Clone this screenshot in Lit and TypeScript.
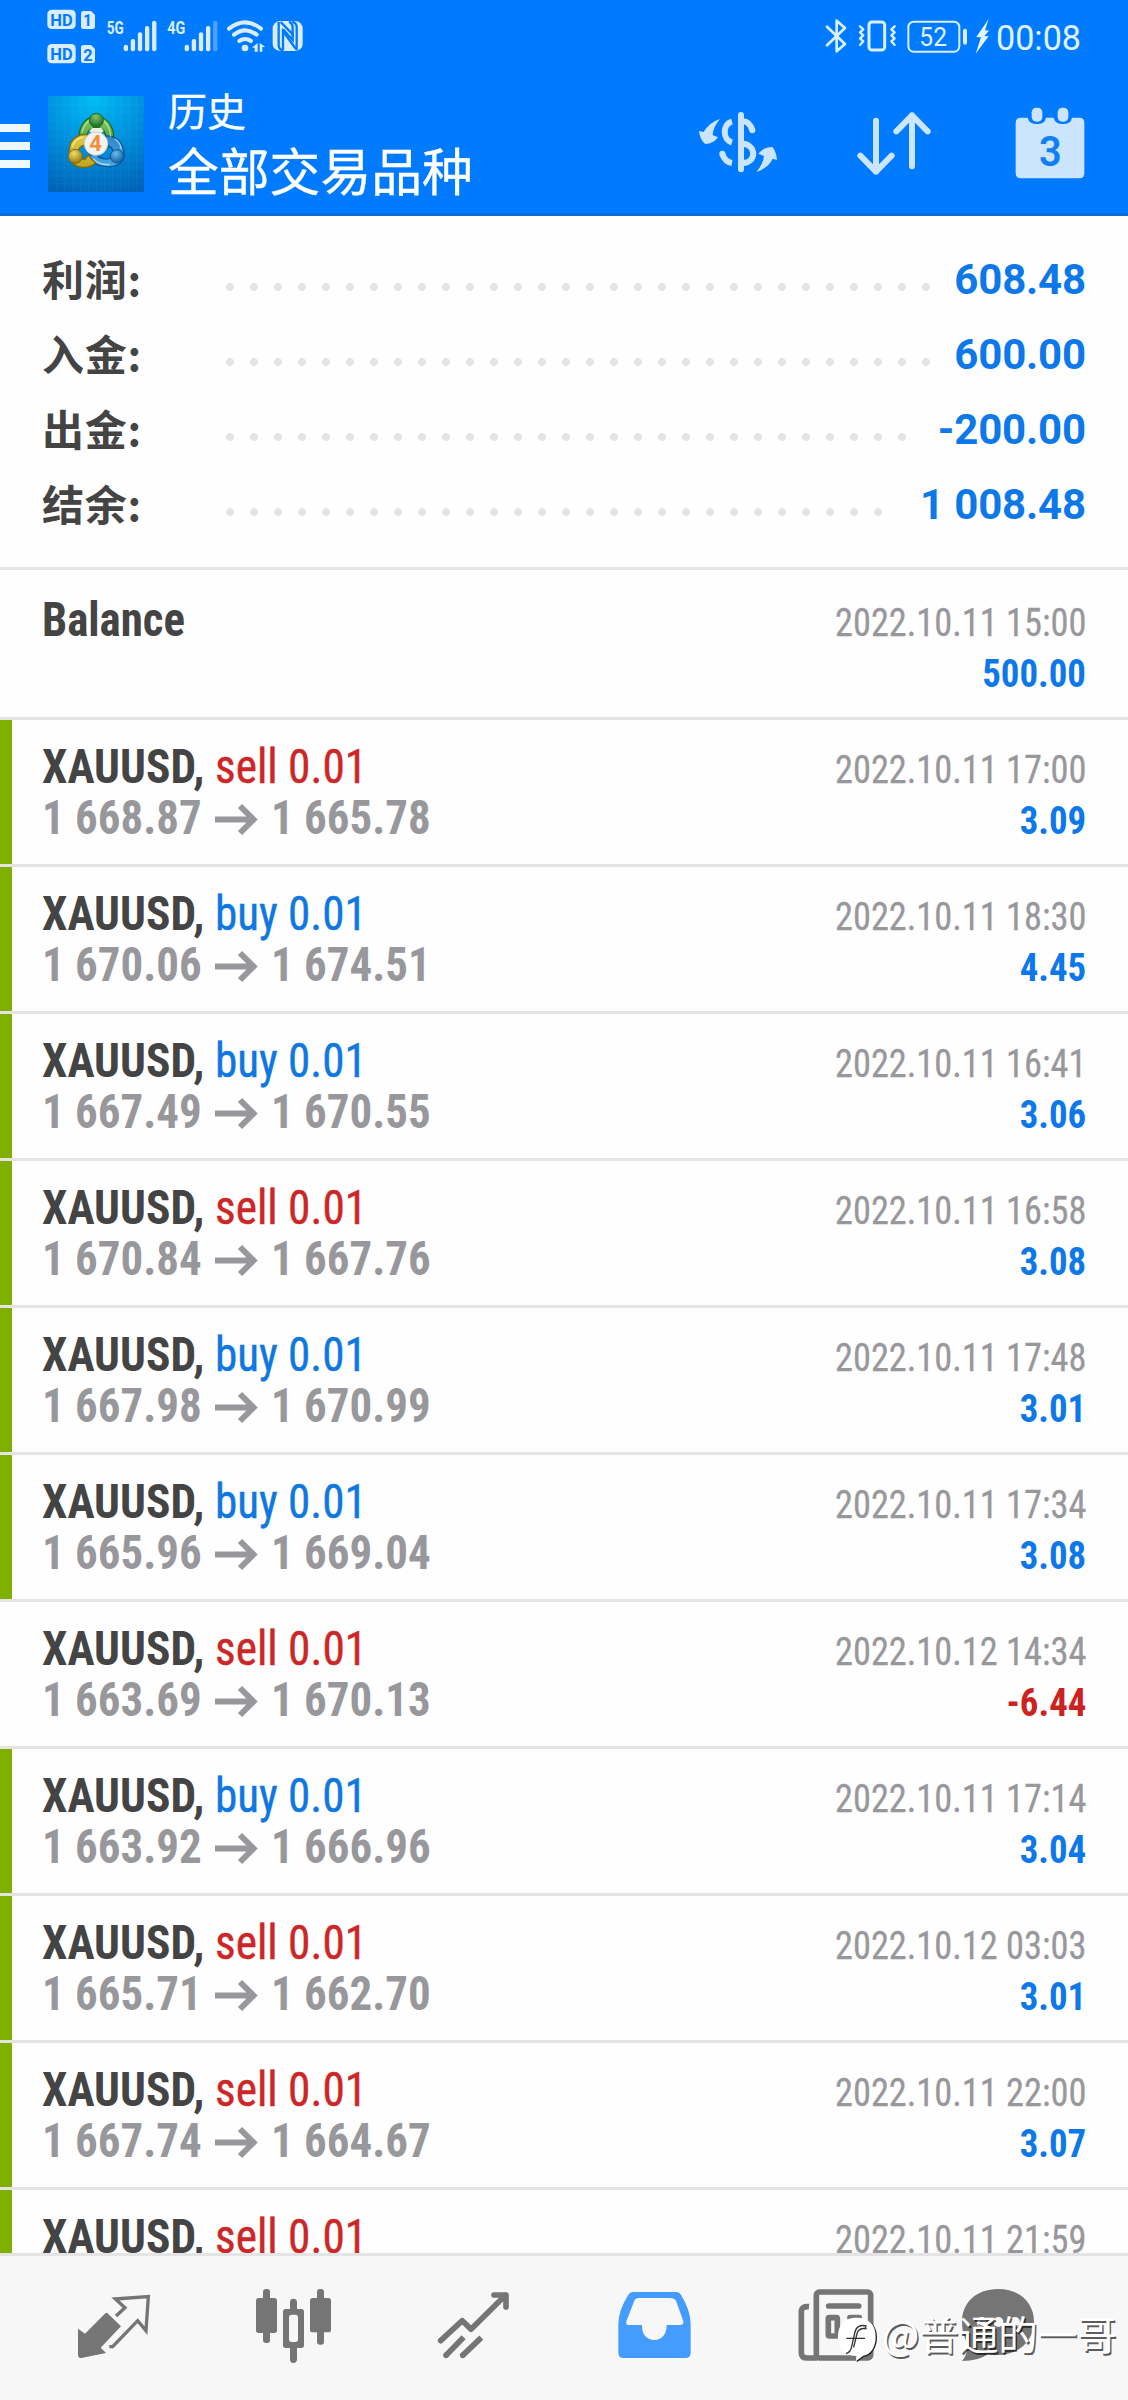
import { LitElement, html, css, svg, nothing } from "lit";
import { customElement, property } from "lit/decorators.js";
import { classMap } from "lit/directives/class-map.js";

interface Deal {
  side: "buy" | "sell";
  open: string;
  close: string;
  time: string;
  profit: string;
}

const DEALS: Deal[] = [
  { side: "sell", open: "1 668.87", close: "1 665.78", time: "2022.10.11 17:00", profit: "3.09" },
  { side: "buy", open: "1 670.06", close: "1 674.51", time: "2022.10.11 18:30", profit: "4.45" },
  { side: "buy", open: "1 667.49", close: "1 670.55", time: "2022.10.11 16:41", profit: "3.06" },
  { side: "sell", open: "1 670.84", close: "1 667.76", time: "2022.10.11 16:58", profit: "3.08" },
  { side: "buy", open: "1 667.98", close: "1 670.99", time: "2022.10.11 17:48", profit: "3.01" },
  { side: "buy", open: "1 665.96", close: "1 669.04", time: "2022.10.11 17:34", profit: "3.08" },
  { side: "sell", open: "1 663.69", close: "1 670.13", time: "2022.10.12 14:34", profit: "-6.44" },
  { side: "buy", open: "1 663.92", close: "1 666.96", time: "2022.10.11 17:14", profit: "3.04" },
  { side: "sell", open: "1 665.71", close: "1 662.70", time: "2022.10.12 03:03", profit: "3.01" },
  { side: "sell", open: "1 667.74", close: "1 664.67", time: "2022.10.11 22:00", profit: "3.07" },
  { side: "sell", open: "", close: "", time: "2022.10.11 21:59", profit: "" },
];

const SUMMARY = [
  { label: "利润:", value: "608.48", dots: 30 },
  { label: "入金:", value: "600.00", dots: 30 },
  { label: "出金:", value: "-200.00", dots: 29 },
  { label: "结余:", value: "1 008.48", dots: 28 },
];

/** Condenses its text horizontally so that it takes exactly `w` pixels. */
@customElement("fit-text")
class FitText extends LitElement {
  @property({ type: Number }) w = 0;
  @property() text = "";

  static styles = css`
    :host { display: inline-block; white-space: pre; vertical-align: top; }
    .inner { display: inline-block; transform-origin: 0 50%; white-space: pre; }
  `;

  updated() {
    const inner = this.renderRoot.querySelector(".inner") as HTMLElement;
    const natural = inner.offsetWidth;
    this.style.width = this.w + "px";
    if (natural) inner.style.transform = `scaleX(${this.w / natural})`;
  }

  render() {
    return html`<span class="inner">${this.text}</span>`;
  }
}

@customElement("status-bar")
class StatusBar extends LitElement {
  static styles = css`
    :host { display: flex; justify-content: space-between; height: 72px; }
    svg { display: block; }
    text { font-family: Roboto, "Noto Sans", sans-serif; }
  `;

  render() {
    return html`
      <svg width="340" height="72" viewBox="0 0 1020 216" fill="#d9edff">
        <rect x="142" y="29" width="85" height="58" rx="13" />
        <rect x="142" y="132" width="85" height="58" rx="13" />
        <path d="M250 33H273L285 45V80Q285 87 278 87H250Q243 87 243 80V40Q243 33 250 33Z" />
        <path d="M250 135H273L285 147V182Q285 189 278 189H250Q243 189 243 182V142Q243 135 250 135Z" />
        <g fill="#007aff" font-weight="700">
          <text x="151" y="77" font-size="51" textLength="67" lengthAdjust="spacingAndGlyphs">HD</text>
          <text x="151" y="180" font-size="51" textLength="67" lengthAdjust="spacingAndGlyphs">HD</text>
          <text x="250" y="79" font-size="48" textLength="26" lengthAdjust="spacingAndGlyphs">1</text>
          <text x="250" y="182" font-size="48" textLength="28" lengthAdjust="spacingAndGlyphs">2</text>
        </g>
        <g font-weight="700">
          <text x="320" y="103" font-size="54" textLength="51" lengthAdjust="spacingAndGlyphs">5G</text>
          <text x="502" y="103" font-size="54" textLength="54" lengthAdjust="spacingAndGlyphs">4G</text>
        </g>
        ${[371, 554].map((x, s) =>
          [0, 1, 2, 3, 4].map((i) => {
            const h = [20, 37, 57, 76, 92][i];
            return svg`<rect x=${x + i * 21.3} y=${154 - h} width="13" height=${h} rx="6"
              opacity=${s === 1 && i === 4 ? 0.35 : 1} />`;
          })
        )}
        <g fill="none" stroke="#d9edff" stroke-width="12" stroke-linecap="round">
          <path d="M687 86Q735 48 783 86" />
          <path d="M702 104Q735 78 770 104" />
          <path d="M718 123Q735 111 753 123" />
        </g>
        <circle cx="735" cy="144" r="10" />
        <path d="M756 143L773 129V155H764V143ZM779 129L796 141H787V155H779Z" />
        <rect x="818" y="63" width="90" height="90" rx="22" />
        <g fill="none" stroke="#007aff" stroke-width="7">
          <path d="M836 66V136Q837 149 850 151" />
          <path d="M842 66L878 103V80Q876 69 867 65" />
          <path d="M890 151V80Q889 69 877 65" />
          <path d="M849 151V94L888 147" />
          <path d="M849 88L878 120V98" />
        </g>
      </svg>
      <svg width="468" height="72" viewBox="0 0 1404 216" fill="none" stroke="#d9f1ff" stroke-linecap="round" stroke-linejoin="round">
        <path stroke-width="8" d="M501 80L555 132L530 154V62L555 84L501 136" />
        <rect x="627" y="66" width="47" height="84" rx="9" stroke-width="9" />
        <path stroke-width="7" d="M600 79L610 88L600 97L610 106L600 115L610 124L600 135M704 79L694 88L704 97L694 106L704 115L694 124L704 135" />
        <rect x="745" y="65" width="153" height="90" rx="16" stroke-width="6" />
        <path stroke-width="12" d="M915 92V128" />
        <path fill="#e6f6ff" stroke="none" d="M986 57L949 111L963 112L947 161L986 109L973 108L987 92L975 91Z" />
        <g fill="#e0f4ff" stroke="none">
          <text x="778" y="137" font-size="78" textLength="83" lengthAdjust="spacingAndGlyphs">52</text>
          <text x="1008" y="151" font-size="107" textLength="255" lengthAdjust="spacingAndGlyphs">00:08</text>
        </g>
      </svg>
    `;
  }
}

@customElement("app-bar")
class AppBar extends LitElement {
  static styles = css`
    :host { display: flex; height: 141px; border-bottom: 3px solid #0a6cdb; }
    svg { display: block; flex: none; }
    .menu { display: flex; flex-direction: column; gap: 10px; width: 30px; padding-top: 52px; }
    .menu i { height: 8px; background: #eef8ff; }
    .logo { margin: 24px 0 0 18px; }
    .titles {
      display: flex; flex-direction: column; margin: 7px auto 0 24px; color: #fff;
      font-family: "Noto Sans CJK SC", sans-serif; line-height: 60px; white-space: nowrap;
      -webkit-text-stroke: 0.35px #fff;
    }
    .screen { font-size: 39px; }
    .filter { font-size: 50.8px; }
    text { font-family: Roboto, sans-serif; }
  `;

  private logo() {
    const lines = [170, 193, 217, 241, 265, 289, 313, 337, 361, 385, 409];
    return html`<svg class="logo" width="96" height="96" viewBox="144 288 288 288">
      <defs>
        <radialGradient id="bg" cx="48%" cy="2%" r="105%">
          <stop offset="0" stop-color="#00bdf6" /><stop offset=".5" stop-color="#008fdc" /><stop offset="1" stop-color="#0062b5" />
        </radialGradient>
        <linearGradient id="gr" x1="0" y1="0" x2="0" y2="1"><stop offset="0" stop-color="#8bcf62" /><stop offset="1" stop-color="#2e8a2f" /></linearGradient>
        <linearGradient id="ye" x1="0" y1="0" x2="0" y2="1"><stop offset="0" stop-color="#e2cf48" /><stop offset="1" stop-color="#c0a41c" /></linearGradient>
        <linearGradient id="bl" x1="0" y1="0" x2="0" y2="1"><stop offset="0" stop-color="#2f86cc" /><stop offset="1" stop-color="#4ba6e2" /></linearGradient>
        <radialGradient id="gh" cx="45%" cy="25%" r="65%"><stop offset="0" stop-color="#84c46c" /><stop offset="1" stop-color="#23742a" /></radialGradient>
        <radialGradient id="yh" cx="40%" cy="30%" r="65%"><stop offset="0" stop-color="#eddc6a" /><stop offset="1" stop-color="#9c8215" /></radialGradient>
        <radialGradient id="bh" cx="40%" cy="30%" r="65%"><stop offset="0" stop-color="#6fbcec" /><stop offset="1" stop-color="#1467a8" /></radialGradient>
      </defs>
      <rect x="144" y="288" width="288" height="288" fill="url(#bg)" />
      <g stroke="#7fd3ff" stroke-opacity=".11" stroke-width="2">
        ${lines.map((v) => svg`<path d="M${v} 288V576M144 ${v + 143}H432" />`)}
      </g>
      <g stroke-linejoin="round">
        <path fill="url(#gr)" stroke="#1d6b25" stroke-width="4" d="M237 408C238 380 254 358 275 351H304C328 361 342 387 341 414C338 432 325 446 309 449L300 431L318 412C316 393 304 383 290 382C273 383 262 394 260 408Z" />
        <path fill="url(#bl)" stroke="#0d5799" stroke-width="4" d="M318 408C347 407 366 425 371 452L372 473C364 494 342 503 318 500C294 499 274 487 266 466L287 462C298 476 318 481 334 474L339 451C334 440 325 434 309 435Z" />
        <path fill="url(#ye)" stroke="#7d6b10" stroke-width="4" d="M262 404C237 401 215 415 209 439L206 468C212 492 231 504 254 502C270 501 282 494 287 487C276 481 270 474 265 465L254 479L238 473C230 459 234 442 250 436L263 440Z" />
        <path fill="none" stroke="#d8f0b8" stroke-opacity=".65" stroke-width="4" d="M246 398Q252 374 268 361M312 364Q331 382 332 410" />
        <path fill="none" stroke="#fff4a8" stroke-opacity=".75" stroke-width="4" d="M216 442Q224 416 250 411" />
        <path fill="none" stroke="#c6ecff" stroke-opacity=".75" stroke-width="4" d="M345 417Q361 427 364 448M280 476Q299 496 329 493" />
      </g>
      <path fill="#e9f3dc" d="M268 393L276 384H304L311 393L302 400H275Z" />
      <circle cx="289" cy="361" r="21" fill="url(#gh)" stroke="#1d6b25" stroke-width="3" />
      <circle cx="226" cy="469" r="21" fill="url(#yh)" stroke="#7d6b10" stroke-width="3" />
      <circle cx="351" cy="469" r="20" fill="url(#bh)" stroke="#0d5799" stroke-width="3" />
      <circle cx="288" cy="431" r="35" fill="#f4f3f2" stroke="#c9cfd3" stroke-width="3" />
      <text x="287" y="454" text-anchor="middle" font-size="66" font-weight="700" fill="#f0913a">4</text>
    </svg>`;
  }

  render() {
    return html`
      <div class="menu"><i></i><i></i><i></i></div>
      ${this.logo()}
      <div class="titles"><span class="screen">历史</span><span class="filter">全部交易品种</span></div>
      <svg width="156" height="141" viewBox="0 216 468 423" fill="#cce5ff">
        <path d="M117 393L131 396Q148 367 180 357Q160 380 158 405L174 412Q160 432 136 432Q120 420 117 393Z" />
        <path d="M351 480L338 476Q325 504 289 516Q309 493 312 468L295 461Q312 441 337 441Q348 452 351 480Z" />
        <g fill="none" stroke="#cce5ff" stroke-width="18">
          <path d="M216 365C187 372 187 419 216 427" />
          <path d="M187 462Q195 486 216 489" stroke-linecap="butt" />
          <path d="M243 345V508" stroke-linecap="round" />
          <path d="M250 364Q270 366 277 391" />
          <path d="M250 431C290 437 289 486 250 489" />
        </g>
        <circle cx="187" cy="461" r="9" /><circle cx="277" cy="391" r="9" />
      </svg>
      <svg width="156" height="141" viewBox="468 216 468 423" fill="none" stroke="#cce5ff" stroke-width="18" stroke-linecap="round" stroke-linejoin="round">
        <path d="M648 362V515M601 467L648 515L695 467" />
        <path d="M756 499V346M709 394L756 346L803 394" />
      </svg>
      <svg width="156" height="141" viewBox="936 216 468 423" fill="#cce5ff">
        <path d="M1082 353H1103Q1107 372 1131 372Q1155 372 1158 353H1181Q1185 372 1209 372Q1233 372 1236 353H1258Q1273 353 1273 368V520Q1273 535 1258 535H1082Q1067 535 1067 520V368Q1067 353 1082 353Z" />
        <rect x="1115" y="323" width="32" height="42" rx="14" />
        <rect x="1193" y="323" width="32" height="42" rx="14" />
        <text x="1171" y="497" text-anchor="middle" font-size="130" font-weight="600" fill="#0f7ff5" textLength="68" lengthAdjust="spacingAndGlyphs">3</text>
      </svg>
    `;
  }
}

@customElement("account-summary")
class AccountSummary extends LitElement {
  static styles = css`
    :host { display: block; padding: 26px 42px 25px 42px; border-bottom: 3px solid #e4e4e4; }
    .row { display: flex; height: 75px; align-items: flex-start; }
    .label { width: 176px; color: #444; font: 700 42px/71px "Noto Sans CJK SC", sans-serif; letter-spacing: 0.8px; }
    .dots {
      height: 24px; margin-top: 33px;
      background: radial-gradient(circle at 12px 12px, #e4e4e4 3.6px, transparent 4.3px) 0 0 / 24px 24px repeat-x;
    }
    .value { margin-left: auto; color: #0d78ea; font: 700 42px/75px Roboto, sans-serif; letter-spacing: -0.15px; white-space: pre; }
  `;

  render() {
    return SUMMARY.map(
      (r) => html`<div class="row">
        <span class="label">${r.label}</span>
        <span class="dots" style="width:${r.dots * 24}px"></span>
        <span class="value">${r.value}</span>
      </div>`
    );
  }
}

@customElement("deal-row")
class DealRow extends LitElement {
  @property({ attribute: false }) deal?: Deal;

  static styles = css`
    :host { display: block; }
    .row {
      display: flex; justify-content: space-between; box-sizing: border-box; height: 147px;
      border-bottom: 3px solid #e4e4e4; padding-right: 42px;
      font-family: "Roboto Condensed", Roboto, sans-serif; font-stretch: condensed; line-height: 51px;
    }
    .row::before { content: ""; width: 12px; flex: none; }
    .gain::before { background: #7fb000; }
    .left { flex: 1; padding: 21px 0 0 30px; font-size: 48px; }
    .right { display: flex; flex-direction: column; align-items: flex-end; padding-top: 24px; font-size: 39.4px; }
    .line { display: flex; height: 51px; }
    .name { font-weight: 700; color: #444; }
    .sell { color: #cc2626; -webkit-text-stroke: 0.4px #cc2626; }
    .buy { color: #0f78e0; -webkit-text-stroke: 0.4px #0f78e0; }
    .price { font-weight: 700; color: #98989c; }
    .time { color: #98989c; -webkit-text-stroke: 0.3px #98989c; }
    .profit { font-weight: 700; color: #0d78ea; transform: scaleX(0.935); transform-origin: 100% 50%; }
    .loss { color: #cc2222; }
    .arrow { display: block; margin: 0 13px 0 13px; }
    .balance { height: 150px; }
    .balance .left { padding-top: 24px; }
    .balance .right { padding-top: 27px; }
  `;

  render() {
    const d = this.deal;
    if (!d) {
      return html`<div class="row balance">
        <div class="left"><fit-text class="name" .w=${143} text="Balance"></fit-text></div>
        <div class="right">
          <fit-text class="time" .w=${251} text="2022.10.11 15:00"></fit-text>
          <span class="profit">500.00</span>
        </div>
      </div>`;
    }
    const loss = d.profit.startsWith("-");
    return html`<div class=${classMap({ row: true, gain: !loss })}>
      <div class="left">
        <div class="line">
          <fit-text class="name" .w=${173} text="XAUUSD, "></fit-text>
          <fit-text class=${d.side} .w=${152} text="${d.side} 0.01"></fit-text>
        </div>
        ${d.open
          ? html`<div class="line">
              <fit-text class="price" .w=${160} .text=${d.open}></fit-text>
              <svg class="arrow" width="43" height="51" viewBox="0 0 43 51" fill="none" stroke="#98989c" stroke-width="6">
                <path d="M0 27.5H40M25 14L38.5 27.5L25 41" />
              </svg>
              <fit-text class="price" .w=${160} .text=${d.close}></fit-text>
            </div>`
          : nothing}
      </div>
      <div class="right">
        <fit-text class="time" .w=${251} .text=${d.time}></fit-text>
        <span class=${classMap({ profit: true, loss })}>${d.profit}</span>
      </div>
    </div>`;
  }
}

@customElement("nav-bar")
class NavBar extends LitElement {
  static styles = css`
    :host { display: flex; box-sizing: border-box; height: 147px; padding: 0 24px; border-top: 3px solid #e4e4e4; background: #f7f7f7; }
    svg { display: block; flex: none; }
  `;

  render() {
    return html`
      <svg width="180" height="144" viewBox="72 288 540 432" fill="#757575">
        <path d="M321 458L363 499L302 563L318 579L244 594Q234 594 234 584V506L255 521L317 459Z" />
        <path fill="none" stroke="#757575" stroke-width="10" d="M348 468L375 443L346 417L445 410L438 512L413 482L338 560H328" />
      </svg>
      <svg width="180" height="144" viewBox="612 288 540 432" fill="#757575">
        <rect x="768" y="414" width="63" height="105" rx="8" /><rect x="789" y="387" width="21" height="162" rx="9" />
        <rect x="930" y="414" width="63" height="103" rx="8" /><rect x="951" y="387" width="21" height="167" rx="9" />
        <path fill-rule="evenodd" d="M857 447H870V425Q871 416 880 416Q890 416 891 425V447H904Q912 447 912 455V556Q912 564 904 564H891V600Q889 609 880 609Q871 609 870 600V564H857Q849 564 849 556V455Q849 447 857 447ZM875 464Q867 464 867 472V538Q867 546 875 546H886Q894 546 894 538V472Q894 464 886 464Z" />
      </svg>
      <svg width="180" height="144" viewBox="-48 288 540 432" fill="none" stroke="#757575" stroke-width="17" stroke-linecap="round" stroke-linejoin="round">
        <path d="M122 542L187 482L213 508L317 405M282 405H318V441" />
        <path stroke-linecap="butt" d="M138 586L191 532M188 586L244 533" />
        <path d="M138 586h.1M188 586h.1" />
      </svg>
      <svg width="180" height="144" viewBox="492 288 540 432" fill="#449cff">
        <path fill-rule="evenodd" d="M699 396H828Q837 396 842 403Q872 452 872 492V578Q872 594 856 594H671Q655 594 655 578V492Q656 450 686 403Q691 396 699 396ZM716 414Q706 414 703 422L679 484Q676 495 686 495H726C725 524 741 540 763 540C785 540 800 524 800 495H842Q852 494 850 484L829 425Q826 414 809 414Z" />
      </svg>
      <svg width="180" height="144" viewBox="-60 288 540 432" fill="none" stroke="#757575" stroke-width="17">
        <rect x="157" y="396" width="163" height="198" rx="9" />
        <path d="M135 440Q112 438 112 455V578Q112 594 130 594H160" />
        <path d="M194 438H284M258 473H286" stroke-linecap="round" />
        <rect x="193" y="473" width="27" height="55" rx="3" />
      </svg>
      <svg width="164" height="144" viewBox="480 288 492 432" fill="#757575">
        <path d="M702 387C770 387 810 430 810 485C810 541 765 585 702 585Q682 585 672 582Q645 603 594 603Q607 590 613 554Q594 525 594 485C594 430 635 387 702 387Z" />
        <g fill="#f7f7f7"><circle cx="653" cy="486" r="15" /><circle cx="703" cy="486" r="15" /><circle cx="753" cy="486" r="15" /></g>
      </svg>
    `;
  }
}

@customElement("app-root")
class AppRoot extends LitElement {
  static styles = css`
    :host { display: flex; flex-direction: column; position: relative; width: 1128px; height: 2400px; overflow: hidden; background: #fefefe; }
    .top { flex: none; background: #007aff; }
    .list { flex: 1; min-height: 0; overflow: hidden; }
    nav-bar { flex: none; }
    .mark { position: absolute; left: 836px; top: 2303px; display: flex; align-items: center; height: 60px; }
    .mark svg { display: block; margin-top: 6px; }
    .mark span {
      margin-left: 4px; color: #fff; font: 400 39.5px/60px "Noto Sans CJK SC", sans-serif;
      text-shadow: 1.5px 1.5px 0 rgba(0, 0, 0, 0.65); white-space: nowrap;
    }
  `;

  render() {
    return html`
      <div class="top"><status-bar></status-bar><app-bar></app-bar></div>
      <div class="list">
        <account-summary></account-summary>
        <deal-row></deal-row>
        ${DEALS.map((d) => html`<deal-row .deal=${d}></deal-row>`)}
      </div>
      <nav-bar></nav-bar>
      <div class="mark">
        <svg width="42" height="60" viewBox="216 438 126 180">
          <path fill="#222" d="M282 476C320 476 339 498 339 532C339 566 320 589 300 591L278 607L280 590C300 588 330 576 333 532C334 498 312 476 282 476Z" />
          <path fill="#fff" d="M279 473C316 473 335 495 335 530C335 564 318 584 298 587L276 603L277 588C241 586 222 564 222 530C222 495 241 473 279 473Z" />
          <path fill="none" stroke="#333" stroke-width="4" d="M308 498Q279 491 273 516L263 560Q260 577 246 581M247 535H303M304 500L306 506Q283 503 279 521L269 562" />
        </svg>
        <span>@普通的一哥</span>
      </div>
    `;
  }
}
